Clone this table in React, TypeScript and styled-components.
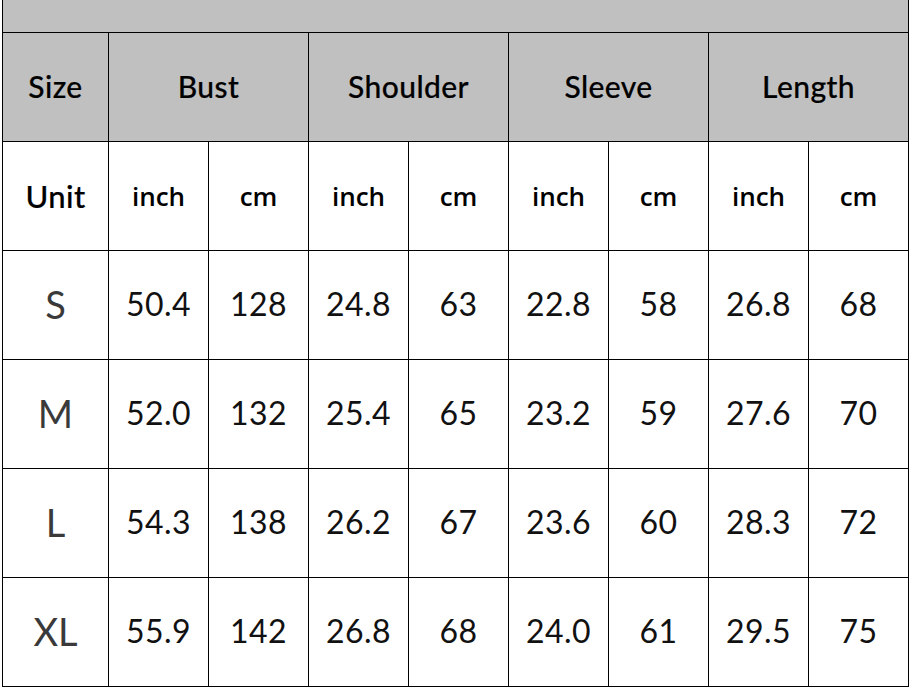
import React, { FunctionComponent } from 'react'
import styled, { createGlobalStyle } from 'styled-components'

const GlobalStyle = createGlobalStyle`
	html, body {
		margin: 0;
		padding: 0;
		background: #ffffff;
	}
`

const Table = styled.div`
	display: grid;
	grid-template-columns: 105px repeat(8, 99px);
	grid-template-rows: 32px repeat(6, 108px);
	gap: 1px;
	padding: 0 1px 1px 1px;
	margin-left: 2px;
	width: 907px;
	box-sizing: border-box;
	background: #000000;
`

const TopBar = styled.div`
	grid-column: 1 / -1;
	background: #c0c0c0;
`

const Cell = styled.div`
	display: flex;
	align-items: center;
	justify-content: center;
	background: #ffffff;
	color: #000000;
`

const HeadCell = styled(Cell)<{ $span?: number }>`
	grid-column: span ${(p) => p.$span || 1};
	background: #c0c0c0;
	font-family: Lato, 'Noto Sans', sans-serif;
	font-weight: 500;
	font-size: 30px;
	letter-spacing: 0.4px;
	padding-bottom: 2px;
	-webkit-text-stroke: 0.2px #000;
`

const UnitLabel = styled(Cell)`
	font-family: Lato, 'Noto Sans', sans-serif;
	font-weight: 500;
	font-size: 31px;
	letter-spacing: 0.4px;
	-webkit-text-stroke: 0.2px #000;
`

const UnitCell = styled(Cell)`
	font-family: 'Open Sans', 'Noto Sans', sans-serif;
	font-weight: 600;
	font-size: 26px;
`

const SizeCell = styled(Cell)`
	font-family: Lato, 'Noto Sans', sans-serif;
	font-weight: 400;
	font-size: 38px;
	color: #3a3a3a;
	padding-bottom: 2px;
`

const ValueCell = styled(Cell)`
	font-family: Lato, 'Noto Sans', sans-serif;
	font-weight: 400;
	font-size: 32px;
	color: #111111;
	letter-spacing: 0.5px;
	padding-bottom: 3px;
`

const groups = ['Bust', 'Shoulder', 'Sleeve', 'Length']

const rows: [string, string[]][] = [
	['S', ['50.4', '128', '24.8', '63', '22.8', '58', '26.8', '68']],
	['M', ['52.0', '132', '25.4', '65', '23.2', '59', '27.6', '70']],
	['L', ['54.3', '138', '26.2', '67', '23.6', '60', '28.3', '72']],
	['XL', ['55.9', '142', '26.8', '68', '24.0', '61', '29.5', '75']],
]

const App: FunctionComponent = () => (
	<>
		<GlobalStyle />
		<Table>
			<TopBar />
			<HeadCell>Size</HeadCell>
			{groups.map((g) => (
				<HeadCell key={g} $span={2}>
					{g}
				</HeadCell>
			))}
			<UnitLabel>Unit</UnitLabel>
			{groups.map((g) => (
				<React.Fragment key={g}>
					<UnitCell>inch</UnitCell>
					<UnitCell>cm</UnitCell>
				</React.Fragment>
			))}
			{rows.map(([size, values]) => (
				<React.Fragment key={size}>
					<SizeCell>{size}</SizeCell>
					{values.map((v, i) => (
						<ValueCell key={i}>{v}</ValueCell>
					))}
				</React.Fragment>
			))}
		</Table>
	</>
)

export default App
